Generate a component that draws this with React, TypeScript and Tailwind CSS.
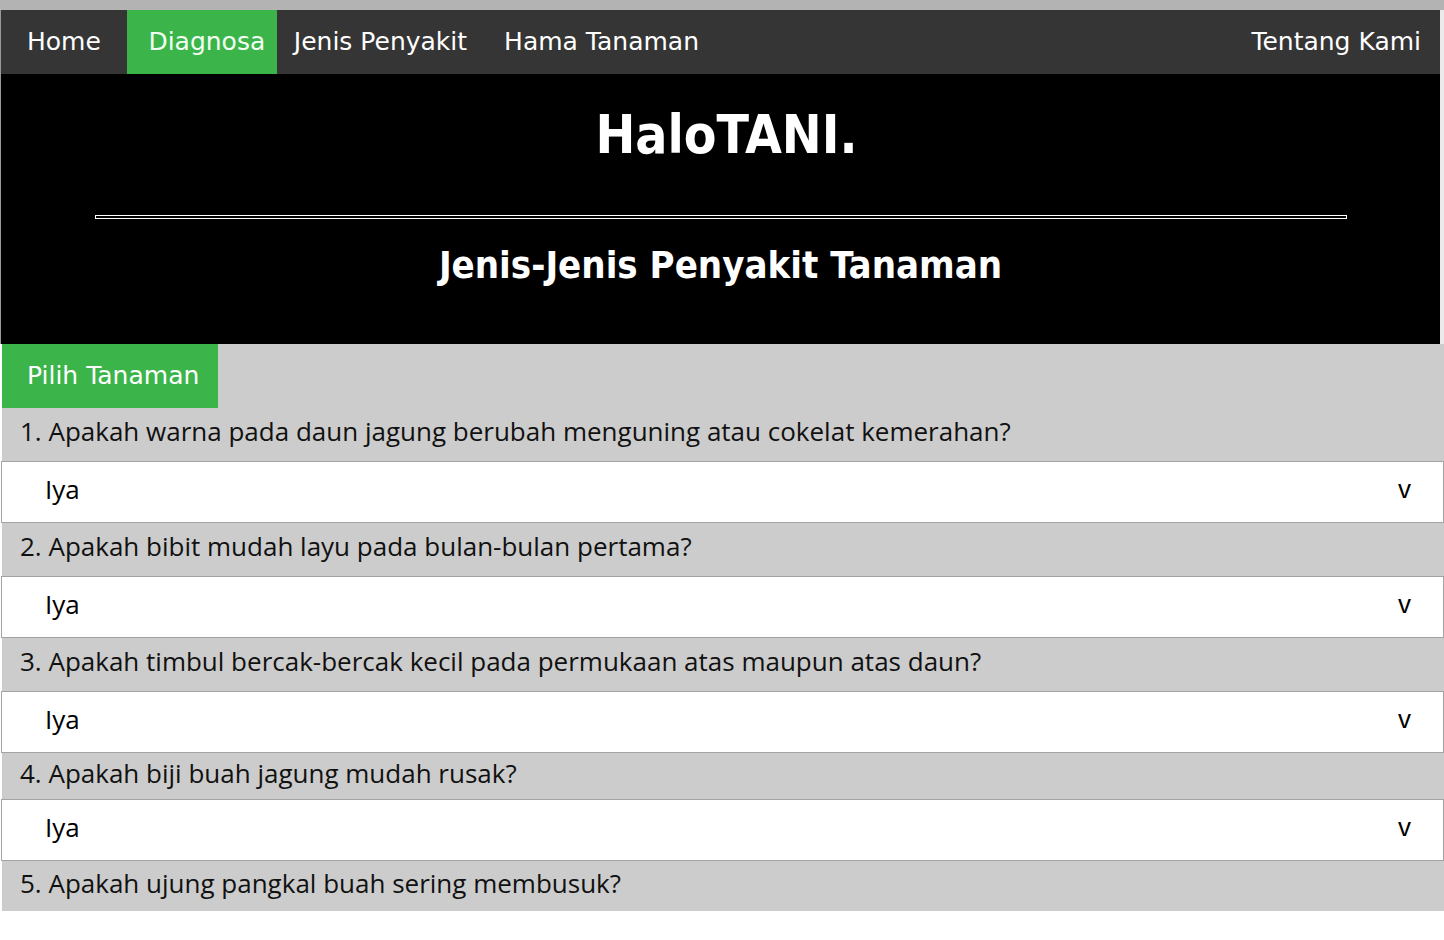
const questions = [
  "1. Apakah warna pada daun jagung berubah menguning atau cokelat kemerahan?",
  "2. Apakah bibit mudah layu pada bulan-bulan pertama?",
  "3. Apakah timbul bercak-bercak kecil pada permukaan atas maupun atas daun?",
  "4. Apakah biji buah jagung mudah rusak?",
  "5. Apakah ujung pangkal buah sering membusuk?",
];

const navFont = { fontFamily: '"DejaVu Sans", Tahoma, sans-serif' };
const titleFont = { fontFamily: '"DejaVu Sans Condensed", "DejaVu Sans", Tahoma, sans-serif' };
const bodyFont = { fontFamily: '"Open Sans", "Noto Sans", sans-serif' };

export default function App() {
  return (
    <div className="min-h-screen bg-white">
      <div className="h-[10px] bg-[#b3b3b3]" />
      <div className="flex">
        <div className="flex-1 border-l border-[#999]">
          {/* Navbar */}
          <nav className="flex h-[64px] items-stretch bg-[#353535] text-[25px] text-white" style={navFont}>
            <a className="flex items-center pl-[26px] pr-[26px]">Home</a>
            <a className="flex w-[150px] items-center justify-center bg-[#3bb54a] pl-[10px] text-[#f2fff2]">Diagnosa</a>
            <a className="flex items-center pl-[17px] pr-[37px]">Jenis Penyakit</a>
            <a className="flex items-center">Hama Tanaman</a>
            <a className="ml-auto flex items-center pr-[19px]">Tentang Kami</a>
          </nav>

          {/* Header */}
          <header className="flex h-[270px] flex-col items-center bg-black text-white" style={titleFont}>
            <h1 className="mt-[34px] pl-[12px] text-[53px] font-bold leading-none">HaloTANI.</h1>
            <div className="mt-[54px] h-[4px] w-[1252px] border border-white bg-black" />
            <h2 className="mt-[27px] text-[38px] font-bold leading-none">Jenis-Jenis Penyakit Tanaman</h2>
          </header>
        </div>
        <div className="w-[4px] bg-[#eceaea]" />
      </div>

      {/* Diagnosa form */}
      <main className="ml-[2px] bg-[#cccccc]" style={bodyFont}>
        <button className="flex h-[64px] w-[216px] items-center bg-[#3bb54a] pl-[25px] text-[25px] text-white" style={navFont}>
          Pilih Tanaman
        </button>
        {questions.map((q, i) => (
          <div key={q}>
            <div
              className={`flex items-center pb-[6px] pl-[18px] text-[26px] text-[#111] ${
                i === 3 ? "h-[46px]" : i === 4 ? "h-[50px]" : "h-[53px]"
              }`}
            >
              {q}
            </div>
            {i < 4 && (
              <div className="-ml-[1px] flex h-[62px] items-center justify-between border border-[#a3a3a3] bg-white pb-[6px] pl-[43px] pr-[32px] text-[26px] text-black">
                <span>Iya</span>
                <span className="text-[26px]" style={{ fontFamily: '"Liberation Sans", Arial, sans-serif' }}>v</span>
              </div>
            )}
          </div>
        ))}
      </main>
    </div>
  );
}
